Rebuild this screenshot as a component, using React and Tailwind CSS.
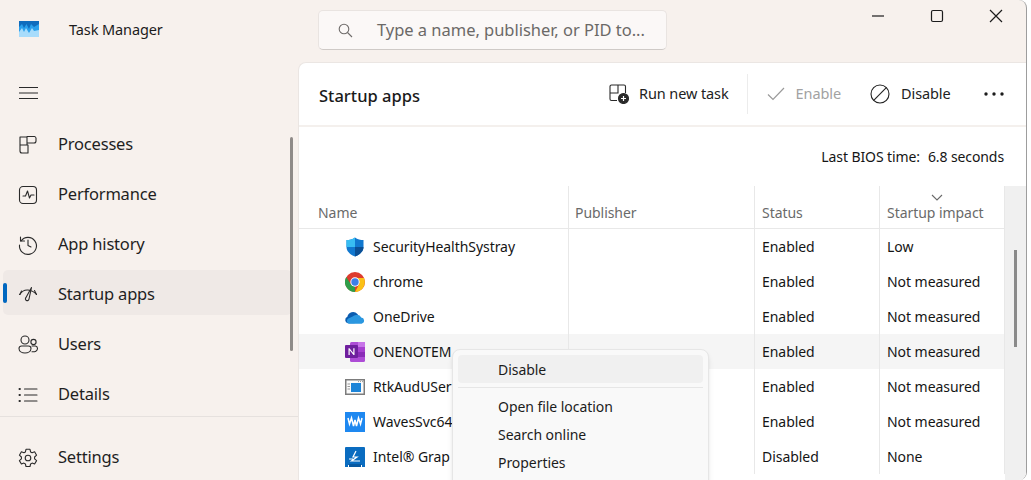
const nav = [
  ["Processes", "p"],
  ["Performance", "perf"],
  ["App history", "h"],
  ["Startup apps", "s"],
  ["Users", "u"],
  ["Details", "d"],
];

function NavIcon({ k }) {
  const c = { width: 22, height: 22, viewBox: "0 0 22 22", fill: "none", stroke: "#2a2a2a", strokeWidth: 1.1, strokeLinecap: "round", strokeLinejoin: "round" };
  if (k === "p") return <svg {...c}><path d="M3 3h7v8H3zM10 2.500h7.500a2 2 0 0 1 1.500 1.500v3a2 2 0 0 1-2 2h-7M3 11h8v8H5a2 2 0 0 1-2-2z" /></svg>;
  if (k === "perf") return <svg {...c}><rect x="2.500" y="2.500" width="17" height="17" rx="3.500" /><path d="M6 12h2.500l2-5 2 7 1.500-3H17" /></svg>;
  if (k === "h") return <svg {...c}><path d="M4 7A8.500 8.500 0 1 1 2.500 11" /><path d="M3.500 3v4h4M11 6v5.500l3 1.500" /></svg>;
  if (k === "s") return <svg {...c}><path d="M2.500 10.500Q6 5.500 11 6t8.500 4.500" /><path d="M17.500 6.500l2 4M4.500 7l-1.500 3.500" /><path d="M14.500 3.500L9 13.500a1.800 1.800 0 1 0 3 1.500l2.500-11.500z" /></svg>;
  if (k === "u") return <svg {...c}><circle cx="8" cy="6" r="4" /><circle cx="16.500" cy="8" r="2.600" /><path d="M2 14.500a2.500 2.500 0 0 1 2.500-2.500h7a2.500 2.500 0 0 1 2.500 2.500c0 3-3 4.500-6 4.500s-6-1.500-6-4.500zM15 12h3.500a2.500 2.500 0 0 1 2 2.500c0 2.500-2.500 3.500-5.500 3.200" /></svg>;
  if (k === "d") return <svg {...c}><path d="M7.500 5h12.500M7.500 11h12.500M7.500 17h12.500" /><path d="M2.500 5h.4M2.500 11h.4M2.500 17h.4" strokeWidth="2" /></svg>;
  return null;
}

function Gear() {
  return (
    <svg width="22" height="22" viewBox="0 0 22 22" fill="none" stroke="#2a2a2a" strokeWidth="1.100" strokeLinejoin="round">
      <circle cx="11" cy="11" r="2.800" />
      <path d="M9 2.300h4l.6 2.600 1.500.8 2.500-.9 2 3.400-2 1.800v1.800l2 1.800-2 3.400-2.500-.9-1.500.9-.6 2.500H9l-.6-2.500-1.500-.9-2.500.9-2-3.400 2-1.800v-1.800l-2-1.800 2-3.400 2.500.9 1.500-.8z" />
    </svg>
  );
}

function AppIcon({ k }) {
  if (k === "shield") return (
    <svg width="20" height="20" viewBox="0 0 20 20">
      <path d="M10 0.500 C12.500 2.500 15.500 3 18.500 3 V10 C18.500 14.500 14.500 17.800 10 19.500 C5.500 17.800 1.500 14.500 1.500 10 V3 C4.500 3 7.500 2.500 10 0.500z" fill="#1178cf" />
      <path d="M10 0.500 C7.500 2.500 4.500 3 1.500 3 V10 H10z" fill="#38bdf2" />
      <path d="M10 10 H18.500 C18.500 14.500 14.500 17.800 10 19.500z" fill="#0b4f94" />
    </svg>
  );
  if (k === "chrome") return (
    <svg width="20" height="20" viewBox="0 0 20 20">
      <circle cx="10" cy="10" r="10" fill="#dd3b2e" />
      <path d="M10 20 A10 10 0 0 1 1.300 5 L6 12.500 L10 14.500z" fill="#2f9e4a" />
      <path d="M10 20 L14.500 11.500 L10 6 H19 A10 10 0 0 1 10 20z" fill="#fbc116" />
      <circle cx="10" cy="10" r="4.700" fill="#fff" />
      <circle cx="10" cy="10" r="3.700" fill="#3d7fe8" />
    </svg>
  );
  if (k === "od") return (
    <svg width="21" height="14" viewBox="0 0 21 14">
      <path d="M3 13.500 A3.500 3.500 0 0 1 2.500 6.800 A6 6 0 0 1 13 3.800 L16 8 L10 13.500z" fill="#0a5cb0" />
      <path d="M4 14 A3 3 0 0 1 3.500 8.500 L8 6.500 A5 5 0 0 1 13 5 A4.500 4.500 0 0 1 17 7.500 A3.300 3.300 0 0 1 17.500 14z" fill="#2a97e0" />
    </svg>
  );
  if (k === "one") return (
    <svg width="20" height="20" viewBox="0 0 20 20">
      <rect x="5" y="0" width="15" height="20" rx="1.500" fill="#ad4cd6" />
      <rect x="13" y="0" width="7" height="5" fill="#c774e8" />
      <rect x="13" y="5" width="7" height="5" fill="#a63fd0" />
      <rect x="13" y="10" width="7" height="5" fill="#8a2bb8" />
      <rect x="0" y="3" width="13" height="13" rx="1" fill="#6f1f9e" />
      <path d="M3.500 13V6.200h1l3.800 4.800V6.200h1.200V13h-1L4.700 8.200V13z" fill="#fff" />
    </svg>
  );
  if (k === "rtk") return (
    <svg width="20" height="16" viewBox="0 0 20 16">
      <rect x="0.750" y="0.750" width="18.500" height="14.500" fill="#fafafa" stroke="#7c7c7c" strokeWidth="1.500" />
      <path d="M13 2.600h5" stroke="#999" strokeDasharray="1 1" />
      <rect x="6" y="4" width="10" height="9" fill="#1c84d8" />
      <path d="M2.500 5h2.500M2.500 7.500h2.500M2.500 10h2.500" stroke="#999" />
    </svg>
  );
  if (k === "waves") return (
    <svg width="20" height="20" viewBox="0 0 20 20">
      <rect width="20" height="20" fill="#1e88f0" />
      <path d="M3 6 L4.500 12 L6.500 6 L8.500 14 L10 8 L11.500 14 L13.500 6 L15.500 12 L17 6" fill="none" stroke="#fff" strokeWidth="1.500" />
    </svg>
  );
  return (
    <svg width="20" height="20" viewBox="0 0 20 20">
      <path d="M0 1 a1 1 0 0 1 1-1 h18 a1 1 0 0 1 1 1 v17 h-20z" fill="#0a6cc0" />
      <rect x="4" y="17" width="12" height="3" fill="#0758a0" />
      <rect y="18" width="3" height="2" fill="#0a6cc0" />
      <rect x="17" y="18" width="3" height="2" fill="#0a6cc0" />
      <path d="M11 4 L8 10 H12 L6.500 14 H15 M4 12 H8" fill="none" stroke="#fff" strokeWidth="1.200" />
    </svg>
  );
}

const rows = [
  ["shield", "SecurityHealthSystray", "Enabled", "Low"],
  ["chrome", "chrome", "Enabled", "Not measured"],
  ["od", "OneDrive", "Enabled", "Not measured"],
  ["one", "ONENOTEM", "Enabled", "Not measured"],
  ["rtk", "RtkAudUSer", "Enabled", "Not measured"],
  ["waves", "WavesSvc64", "Enabled", "Not measured"],
  ["intel", "Intel® Grap", "Disabled", "None"],
];

export default function App() {
  return (
    <div className="h-[480px] w-[1031px] overflow-hidden bg-white font-['Noto_Sans',sans-serif] text-[#1c1c1c]">
      <div className="relative flex h-[480px] w-[1027px] flex-col overflow-hidden rounded-r-lg border-r border-[#9d9d9d] bg-[#f7f1ed]">
        <header className="flex h-[62px] shrink-0 items-start">
          <div className="flex w-[318px] items-center pt-[19px] pl-[19px]">
            <svg width="20" height="16" viewBox="0 0 20 16">
              <rect width="20" height="16" fill="#0f6cbd" />
              <path d="M0 6 L3 3 L5 7 L7.500 3 L10 8 L12 3 L15 6 L20 3 V16 H0z" fill="#2aa0ec" />
              <path d="M0 11 L3 7 L5 11 L7 7 L10 12 L13 7 L15 10 L20 9 V16 H0z" fill="#a8dcfb" />
            </svg>
            <span className="ml-[30px] text-[14.500px] leading-5 tracking-[-0.100px]">Task Manager</span>
          </div>
          <div className="mt-[10px] flex h-[40px] w-[349px] items-center rounded-[5px] border border-[#e9e4e1] border-b-[#cfcac7] bg-[#fbf8f7] pl-[19px]">
            <svg width="15" height="15" viewBox="0 0 15 15" fill="none" stroke="#6f6c6b" strokeWidth="1.100"><circle cx="6" cy="6" r="4.800" /><path d="M9.500 9.500L14 14" /></svg>
            <span className="ml-[24px] text-[16.500px] tracking-[-0.030px] text-[#6b6967]">Type a name, publisher, or PID to...</span>
          </div>
          <div className="ml-auto flex items-center pt-[9px] pr-[23px]">
            <svg width="14" height="14" viewBox="0 0 14 14" fill="none" stroke="#1c1c1c" strokeWidth="1.200"><path d="M1 7h12" /></svg>
            <svg className="ml-[45px]" width="14" height="14" viewBox="0 0 14 14" fill="none" stroke="#1c1c1c" strokeWidth="1.200"><rect x="1.500" y="1.500" width="11" height="11" rx="1.500" /></svg>
            <svg className="ml-[45px]" width="14" height="14" viewBox="0 0 14 14" fill="none" stroke="#1c1c1c" strokeWidth="1.200"><path d="M1 1l12 12M13 1L1 13" /></svg>
          </div>
        </header>
        <div className="flex min-h-0 flex-1">
          <aside className="relative flex w-[298px] shrink-0 flex-col">
            <div className="flex h-[58px] shrink-0 items-start pl-[19px] pt-[24px]">
              <svg width="19" height="14" viewBox="0 0 19 14" fill="none" stroke="#2a2a2a" strokeWidth="1.100"><path d="M0 1.500h19M0 7h19M0 12.500h19" /></svg>
            </div>
            <nav className="flex flex-col">
              {nav.map(([label, k]) => {
                const active = k === "s";
                return (
                  <div key={k} className={`relative ml-[3px] mr-[6px] mb-[5px] flex h-[45px] items-center rounded-[5px] pl-[14px] pt-[4px] ${active ? "bg-[#efe9e6]" : ""}`}>
                    {active && <span className="absolute left-0 top-[13px] h-[20px] w-[4px] rounded-full bg-[#0067c0]" />}
                    <NavIcon k={k} />
                    <span className="ml-[19px] text-[16.500px] tracking-[-0.200px] text-[#1f1f1f]">{label}</span>
                  </div>
                );
              })}
            </nav>
            <div className="mt-[-4px] border-t border-[#e6e1de]" />
            <div className="ml-[3px] mt-[9px] flex h-[45px] items-center pl-[14px] pt-[18px]">
              <Gear />
              <span className="ml-[19px] text-[16.500px] tracking-[-0.200px] text-[#1f1f1f]">Settings</span>
            </div>
            <span className="absolute left-[290px] top-[75px] h-[214px] w-[3px] rounded-full bg-[#8f8b88]" />
          </aside>
          <main className="flex min-w-0 flex-1 flex-col rounded-tl-lg border-t border-l border-[#ebe6e3] bg-white">
            <div className="flex h-[64px] shrink-0 items-center border-b-2 border-[#f4f0ed] pl-[20px]">
              <h1 className="w-[290px] pt-[4px] text-[16.500px] font-medium text-[#1a1a1a]">Startup apps</h1>
              <svg width="20" height="20" viewBox="0 0 20 20" fill="none" stroke="#2a2a2a" strokeWidth="1.100"><path d="M1 9V2.500A1.500 1.500 0 0 1 2.500 1H9v8zM9 1h6a1.500 1.500 0 0 1 1.500 1.500V9M1 9h8M1 9v6a1.500 1.500 0 0 0 1.500 1.500H8" /><circle cx="14.500" cy="14.500" r="5" fill="#2a2a2a" /><path d="M14.500 12v5M12 14.500h5" stroke="#fff" strokeWidth="1.200" /></svg>
              <span className="ml-[10px] text-[14.500px] tracking-[-0.100px] text-[#222]">Run new task</span>
              <span className="ml-[18px] h-[40px] w-px bg-[#ececec]" />
              <svg className="ml-[19px]" width="18" height="14" viewBox="0 0 18 14" fill="none" stroke="#9a9a9a" strokeWidth="1.200"><path d="M1 7.500L6 12.500 17 1" /></svg>
              <span className="ml-[11px] text-[14.500px] tracking-[-0.100px] text-[#a2a2a2]">Enable</span>
              <svg className="ml-[29px]" width="20" height="20" viewBox="0 0 20 20" fill="none" stroke="#222" strokeWidth="1.100"><circle cx="10" cy="10" r="9" /><path d="M3.700 16.300L16.300 3.700" /></svg>
              <span className="ml-[11px] text-[14.500px] tracking-[-0.100px] text-[#222]">Disable</span>
              <svg className="ml-[33px]" width="20" height="4" viewBox="0 0 20 4" fill="#1c1c1c"><circle cx="2" cy="2" r="1.700" /><circle cx="10" cy="2" r="1.700" /><circle cx="18" cy="2" r="1.700" /></svg>
            </div>
            <div className="flex h-[59px] shrink-0 items-center justify-end pr-[22px] pb-[1px] text-[14px] tracking-[-0.100px] text-[#151515]">
              <span>Last BIOS time:</span>
              <span className="ml-[8px]">6.8 seconds</span>
            </div>
            <div className="flex min-h-0 flex-1">
              <div className="relative w-[706px] shrink-0">
                <div className="grid h-[43px] grid-cols-[269px_186px_125px_126px] border-b border-[#e8e8e8] text-[14px] tracking-[-0.050px] text-[#6a6a6a]">
                  <div className="flex items-end pb-[5px] pl-[19px]">Name</div>
                  <div className="flex items-end border-l border-[#e8e8e8] pb-[5px] pl-[6px]">Publisher</div>
                  <div className="flex items-end border-l border-[#e8e8e8] pb-[5px] pl-[7px]">Status</div>
                  <div className="relative flex items-end border-x border-[#e8e8e8] pb-[5px] pl-[7px]">
                    <svg className="absolute left-[51px] top-[8px]" width="12" height="7" viewBox="0 0 12 7" fill="none" stroke="#6a6a6a" strokeWidth="1.100"><path d="M1 1l5 5 5-5" /></svg>
                    Startup impact
                  </div>
                </div>
                {rows.map(([k, name, status, impact]) => (
                  <div key={k} className={`grid h-[35px] grid-cols-[269px_186px_125px_126px] text-[14px] tracking-[-0.050px] text-[#151515] ${k === "one" ? "bg-[#f5f5f5]" : ""}`}>
                    <div className="flex items-center pl-[46px]">
                      <span className="flex w-[20px] items-center justify-center"><AppIcon k={k} /></span>
                      <span className="ml-[8px]">{name}</span>
                    </div>
                    <div className="border-l border-[#e8e8e8]" />
                    <div className="flex items-center border-l border-[#e8e8e8] pl-[7px]">{status}</div>
                    <div className="flex items-center border-x border-[#e8e8e8] pl-[7px]">{impact}</div>
                  </div>
                ))}
                <div className="absolute left-[153px] top-[163px] w-[257px] rounded-lg border border-[#e6e6e6] bg-[#f9f9f9] px-[5px] pt-[5px] pb-[20px] text-[14px] tracking-[-0.050px] text-[#1c1c1c] shadow-md">
                  <div className="flex h-[28px] items-center rounded-[4px] bg-[#f0f0f0] pl-[40px]">Disable</div>
                  <div className="my-[4px] border-t border-[#e6e6e6]" />
                  <div className="flex h-[28px] items-center pl-[40px]">Open file location</div>
                  <div className="flex h-[28px] items-center pl-[40px]">Search online</div>
                  <div className="flex h-[28px] items-center pl-[40px]">Properties</div>
                </div>
              </div>
              <div className="relative flex-1 bg-[#f0f0f0]">
                <span className="absolute left-[9px] top-[64px] h-[97px] w-[3px] bg-[#8a8a8a]" />
              </div>
            </div>
          </main>
        </div>
      </div>
    </div>
  );
}
